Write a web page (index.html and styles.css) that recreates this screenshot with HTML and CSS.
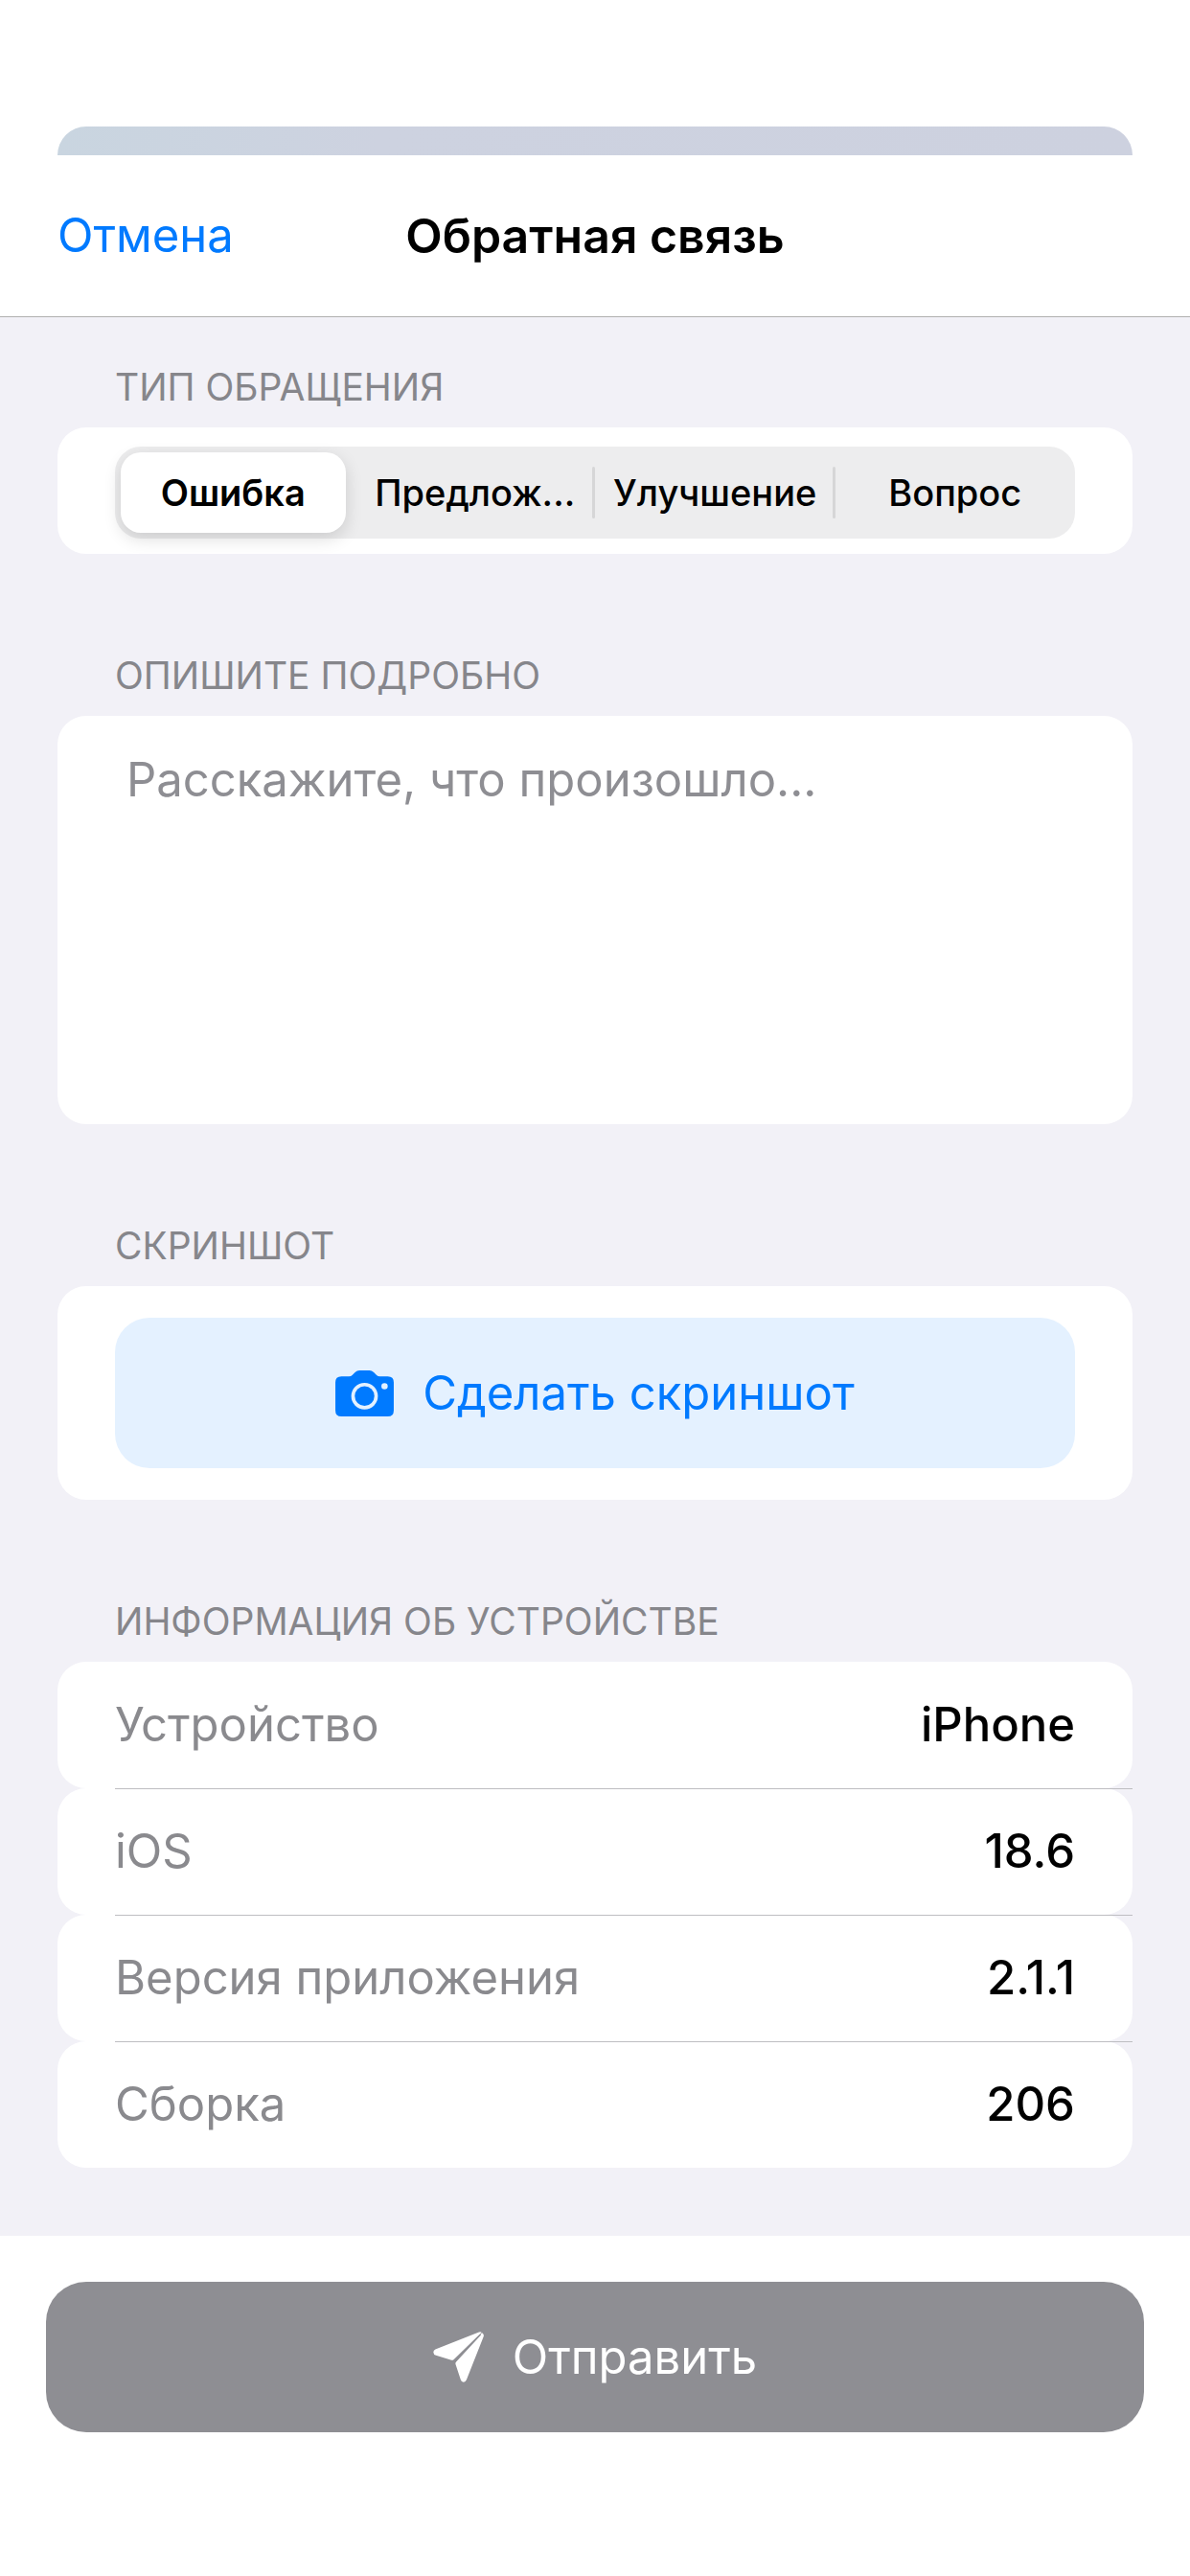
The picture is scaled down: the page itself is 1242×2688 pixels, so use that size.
FILE: index.html
```html
<!DOCTYPE html>
<html lang="ru">
<head>
  <meta charset="utf-8">
  <meta name="viewport" content="width=device-width, initial-scale=1">
  <title>Обратная связь</title>
  <link rel="stylesheet" href="styles.css">
</head>
<body>
  <div class="backdrop"></div>
  <form class="sheet">
    <header class="navbar">
      <button type="button" class="cancel">Отмена</button>
      <h1 class="title">Обратная связь</h1>
    </header>

    <main class="content">
      <fieldset class="section">
        <legend class="label">ТИП ОБРАЩЕНИЯ</legend>
        <div class="card card-segments">
          <div class="segments">
            <label class="segment"><input type="radio" name="kind" checked><span>Ошибка</span></label>
            <label class="segment"><input type="radio" name="kind"><span>Предлож...</span></label>
            <label class="segment"><input type="radio" name="kind"><span>Улучшение</span></label>
            <label class="segment"><input type="radio" name="kind"><span>Вопрос</span></label>
          </div>
        </div>
      </fieldset>

      <section class="section">
        <label class="label" for="details">ОПИШИТЕ ПОДРОБНО</label>
        <div class="card card-text">
          <textarea id="details" class="details" placeholder="Расскажите, что произошло..."></textarea>
        </div>
      </section>

      <section class="section">
        <h2 class="label">СКРИНШОТ</h2>
        <div class="card card-shot">
          <button type="button" class="button button-shot">
            <svg class="icon-camera" viewBox="75 90 184 145" aria-hidden="true">
              <path fill="currentColor" fill-rule="evenodd" d="M94 109h24q6 0 10-4l9-9q6-6 14-6h31q8 0 14 6l9 9q4 4 10 4h25q19 0 19 19v88q0 19-19 19H94q-19 0-19-19v-88q0-19 19-19zM167 129a42 42 0 1 0 0 84a42 42 0 1 0 0-84zM230 130a10 10 0 1 0 0 20a10 10 0 1 0 0-20z"/>
              <circle cx="167" cy="171" r="31" fill="currentColor"/>
            </svg>
            <span>Сделать скриншот</span>
          </button>
        </div>
      </section>

      <section class="section">
        <h2 class="label">ИНФОРМАЦИЯ ОБ УСТРОЙСТВЕ</h2>
        <dl class="info">
          <div class="row"><dt>Устройство</dt><dd>iPhone</dd></div>
          <div class="row"><dt>iOS</dt><dd>18.6</dd></div>
          <div class="row"><dt>Версия приложения</dt><dd>2.1.1</dd></div>
          <div class="row"><dt>Сборка</dt><dd>206</dd></div>
        </dl>
      </section>
    </main>

    <footer class="footer">
      <button type="submit" class="button button-send">
        <svg class="icon-send" viewBox="71 71 158 158" aria-hidden="true">
          <path fill="currentColor" d="M78 126L212 73Q218 70 222 73L135 158Q131 161 126 159L80 145Q72 142 72 135Q72 129 78 126z"/>
          <path fill="currentColor" d="M226 77Q230 81 228 87L175 221Q172 228 166 228Q159 228 157 221L141 172Q140 168 143 165L218 84Q222 79 218 80L223 75z"/>
        </svg>
        <span>Отправить</span>
      </button>
    </footer>
  </form>
</body>
</html>
```
FILE: styles.css
```css
* {
  box-sizing: border-box;
}

body {
  margin: 0;
  padding-top: 132px;
  min-height: 100vh;
  display: flex;
  flex-direction: column;
  background: #fff;
  color: #000;
  font-family: Inter, "Liberation Sans", sans-serif;
  font-size: 49px;
  line-height: 68px;
}

button,
textarea {
  font: inherit;
  border: 0;
}

.backdrop {
  height: 30px;
  margin: 0 60px;
  border-radius: 30px 30px 0 0;
  background: linear-gradient(100deg, #c9d5e0, #cdd2e0 30%, #cdd1df);
}

.sheet {
  flex: 1;
  display: flex;
  flex-direction: column;
}

.navbar {
  display: grid;
  grid-template-columns: 1fr auto 1fr;
  align-items: center;
  height: 169px;
  padding: 0 60px;
  border-bottom: 1px solid #b0b0b0;
}

.cancel {
  justify-self: start;
  padding: 0;
  background: none;
  color: #007aff;
}

.title {
  margin: 0;
  font-size: 50px;
  font-weight: 600;
}

.content {
  flex: 1;
  display: flex;
  flex-direction: column;
  gap: 99px;
  padding: 45px 60px 71px;
  background: #f2f1f7;
}

.section {
  min-width: 0;
  margin: 0;
  padding: 0;
  border: 0;
}

.label {
  display: block;
  height: 70px;
  margin: 0;
  padding: 0 60px;
  color: #86868b;
  font-size: 39px;
  font-weight: 400;
  line-height: 56px;
}

.card {
  border-radius: 30px;
  background: #fff;
}

.card-segments {
  padding: 20px 60px 16px;
}

.segments {
  display: grid;
  grid-template-columns: repeat(4, 1fr);
  height: 96px;
  padding: 6px 0;
  border-radius: 27px;
  background: #ededee;
}

.segment {
  position: relative;
  display: flex;
  align-items: center;
  justify-content: center;
  border-radius: 21px;
  font-size: 38px;
  font-weight: 500;
}

.segment input {
  position: absolute;
  inset: 0;
  margin: 0;
  opacity: 0;
}

.segment:has(input:checked) {
  margin: 0 10px 0 6px;
  background: #fff;
  box-shadow: 0 6px 18px rgba(0, 0, 0, 0.14);
  font-weight: 600;
}

.segment:nth-child(n + 3)::before {
  content: "";
  position: absolute;
  left: -3px;
  top: 15px;
  bottom: 15px;
  width: 3px;
  border-radius: 2px;
  background: #d6d6d7;
}

.card-text {
  padding: 33px 60px 24px;
}

.details {
  display: block;
  width: 100%;
  height: 369px;
  padding: 0 12px;
  resize: none;
  outline: 0;
  background: none;
}

.details::placeholder {
  color: #8e8e93;
  opacity: 1;
}

.card-shot {
  padding: 33px 60px;
}

.button {
  display: flex;
  align-items: center;
  justify-content: center;
  gap: 30px;
  width: 100%;
  height: 157px;
}

.button-shot {
  border-radius: 36px;
  background: #e4f1ff;
  color: #007aff;
}

.button-send {
  border-radius: 42px;
  background: #8e8e93;
  color: #fff;
}

.icon-camera {
  width: 61px;
  height: 48px;
}

.icon-send {
  width: 53px;
  height: 53px;
}

.info {
  margin: 0;
}

.row {
  position: relative;
  display: flex;
  align-items: center;
  justify-content: space-between;
  height: 132px;
  padding: 0 60px;
  border-radius: 30px;
  background: #fff;
}

.row:not(:last-child)::after {
  content: "";
  position: absolute;
  left: 60px;
  right: 0;
  bottom: -1px;
  z-index: 1;
  height: 1px;
  background: #bebec2;
}

.row dt {
  color: #8a8a8e;
}

.row dd {
  margin: 0;
  font-weight: 500;
}

.footer {
  padding: 48px 48px 150px;
}
```
